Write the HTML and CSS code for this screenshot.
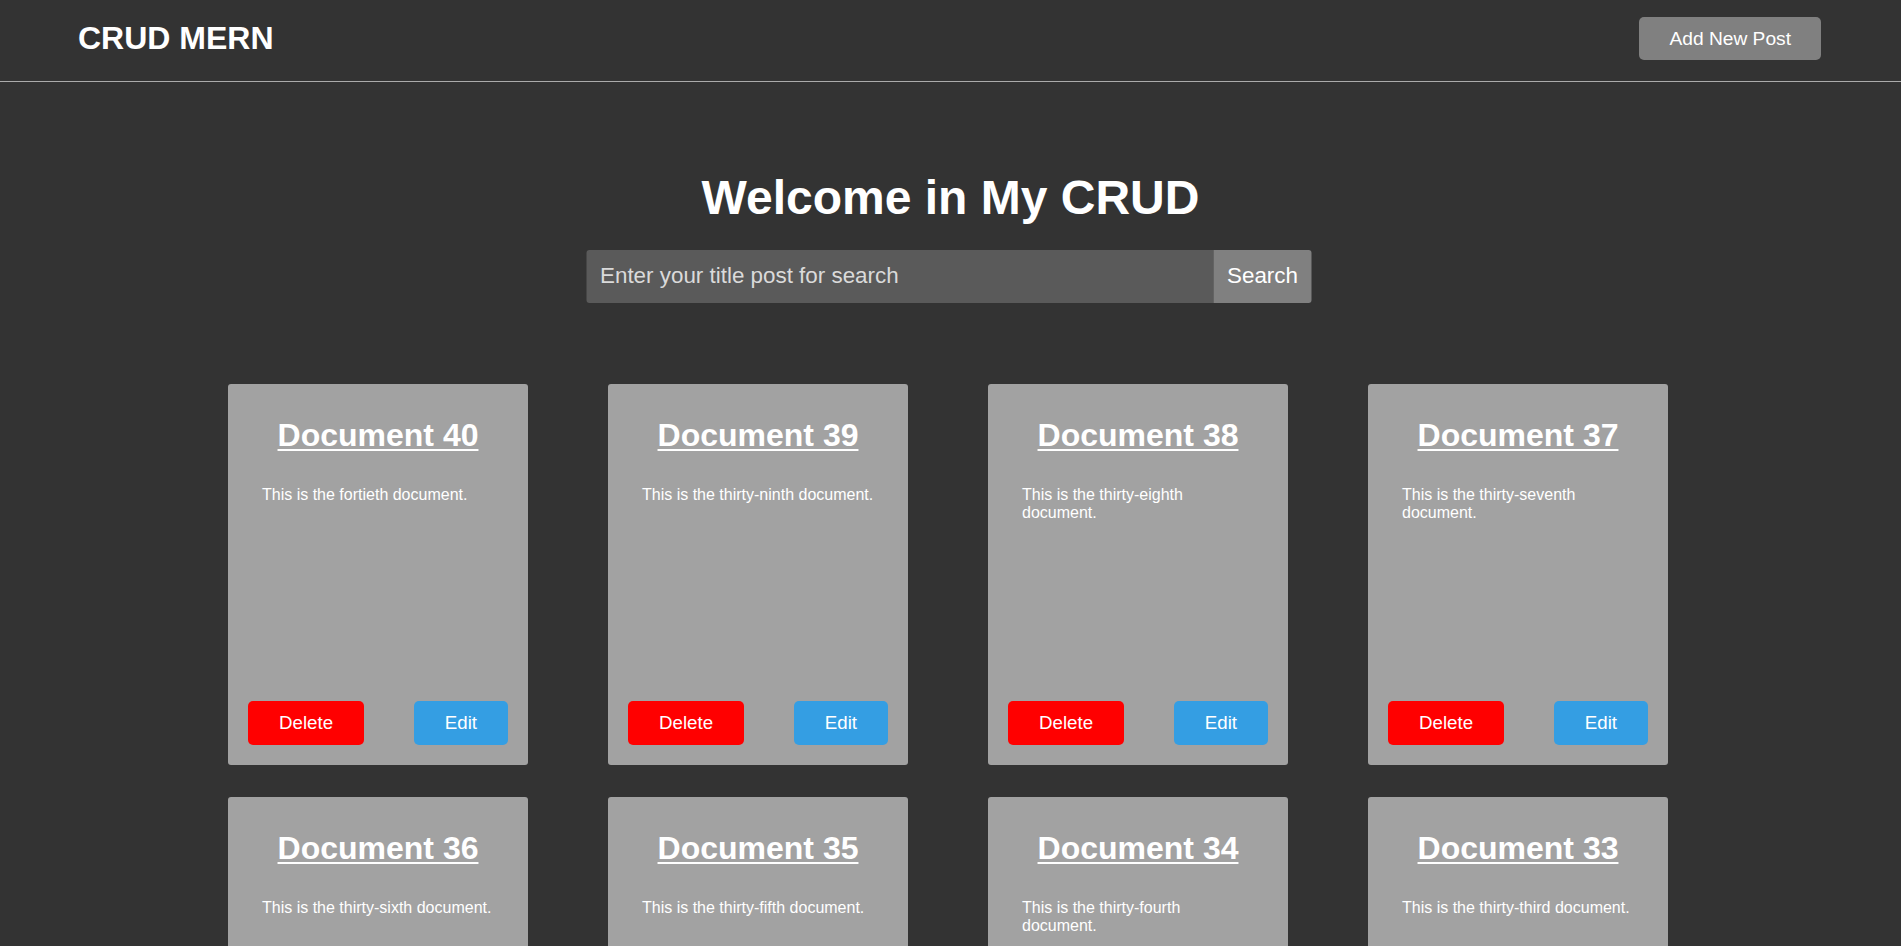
FILE: index.html
```html
<!DOCTYPE html>
<html lang="en">
<head>
<meta charset="utf-8">
<title>CRUD MERN</title>
<link rel="stylesheet" href="styles.css">
</head>
<body>
<header class="topbar">
  <a class="logo" href="#">CRUD MERN</a>
  <button class="add-btn" type="button">Add New Post</button>
</header>
<main class="main">
  <h1 class="welcome">Welcome in My CRUD</h1>
  <form class="search">
    <input class="search-input" type="text" placeholder="Enter your title post for search">
    <button class="search-btn" type="button">Search</button>
  </form>
  <section class="grid">
    <article class="card"><h2 class="card-title"><a href="#">Document 40</a></h2><p class="card-text">This is the fortieth document.</p><div class="card-actions"><button class="btn btn-delete" type="button">Delete</button><button class="btn btn-edit" type="button">Edit</button></div></article>
    <article class="card"><h2 class="card-title"><a href="#">Document 39</a></h2><p class="card-text">This is the thirty-ninth document.</p><div class="card-actions"><button class="btn btn-delete" type="button">Delete</button><button class="btn btn-edit" type="button">Edit</button></div></article>
    <article class="card"><h2 class="card-title"><a href="#">Document 38</a></h2><p class="card-text">This is the thirty-eighth document.</p><div class="card-actions"><button class="btn btn-delete" type="button">Delete</button><button class="btn btn-edit" type="button">Edit</button></div></article>
    <article class="card"><h2 class="card-title"><a href="#">Document 37</a></h2><p class="card-text">This is the thirty-seventh document.</p><div class="card-actions"><button class="btn btn-delete" type="button">Delete</button><button class="btn btn-edit" type="button">Edit</button></div></article>
    <article class="card"><h2 class="card-title"><a href="#">Document 36</a></h2><p class="card-text">This is the thirty-sixth document.</p><div class="card-actions"><button class="btn btn-delete" type="button">Delete</button><button class="btn btn-edit" type="button">Edit</button></div></article>
    <article class="card"><h2 class="card-title"><a href="#">Document 35</a></h2><p class="card-text">This is the thirty-fifth document.</p><div class="card-actions"><button class="btn btn-delete" type="button">Delete</button><button class="btn btn-edit" type="button">Edit</button></div></article>
    <article class="card"><h2 class="card-title"><a href="#">Document 34</a></h2><p class="card-text">This is the thirty-fourth document.</p><div class="card-actions"><button class="btn btn-delete" type="button">Delete</button><button class="btn btn-edit" type="button">Edit</button></div></article>
    <article class="card"><h2 class="card-title"><a href="#">Document 33</a></h2><p class="card-text">This is the thirty-third document.</p><div class="card-actions"><button class="btn btn-delete" type="button">Delete</button><button class="btn btn-edit" type="button">Edit</button></div></article>
    <article class="card"><h2 class="card-title"><a href="#">Document 32</a></h2><p class="card-text">This is the thirty-second document.</p><div class="card-actions"><button class="btn btn-delete" type="button">Delete</button><button class="btn btn-edit" type="button">Edit</button></div></article>
    <article class="card"><h2 class="card-title"><a href="#">Document 31</a></h2><p class="card-text">This is the thirty-first document.</p><div class="card-actions"><button class="btn btn-delete" type="button">Delete</button><button class="btn btn-edit" type="button">Edit</button></div></article>
    <article class="card"><h2 class="card-title"><a href="#">Document 30</a></h2><p class="card-text">This is the thirtieth document.</p><div class="card-actions"><button class="btn btn-delete" type="button">Delete</button><button class="btn btn-edit" type="button">Edit</button></div></article>
    <article class="card"><h2 class="card-title"><a href="#">Document 29</a></h2><p class="card-text">This is the twenty-ninth document.</p><div class="card-actions"><button class="btn btn-delete" type="button">Delete</button><button class="btn btn-edit" type="button">Edit</button></div></article>
  </section>
</main>
</body>
</html>
```
FILE: styles.css
```css
* {
  box-sizing: border-box;
}

html, body {
  margin: 0;
  padding: 0;
  background: #333333;
  color: #ffffff;
  font-family: "Liberation Sans", Arial, sans-serif;
}

body::-webkit-scrollbar {
  display: none;
}

.topbar {
  display: flex;
  justify-content: space-between;
  align-items: center;
  height: 82px;
  padding: 17px 80px 21px 78px;
  border-bottom: 1px solid #ababab;
}

.logo {
  color: #ffffff;
  font-size: 32px;
  font-weight: bold;
  text-decoration: none;
  line-height: normal;
}

.add-btn {
  background: #808080;
  color: #ffffff;
  border: none;
  border-radius: 5px;
  font-family: inherit;
  font-size: 19.2px;
  line-height: normal;
  padding: 10.5px 30px;
  cursor: pointer;
}

.main {
  display: flex;
  flex-direction: column;
  align-items: center;
  padding-bottom: 40px;
}

.welcome {
  margin: 88px 0 0;
  font-size: 48px;
  font-weight: bold;
  line-height: normal;
  text-align: center;
}

.search {
  display: flex;
  width: 725px;
  margin: 25px 0 0;
  transform: translateX(-1.5px);
}

.search-input {
  flex: 1;
  min-width: 0;
  background: #5a5a5a;
  color: #ffffff;
  border: none;
  outline: none;
  border-radius: 3px 0 0 3px;
  font-family: inherit;
  font-size: 22.4px;
  line-height: normal;
  padding: 13.4px 13.5px;
}

.search-input::placeholder {
  color: #dadada;
}

.search-btn {
  width: 98px;
  background: #808080;
  color: #ffffff;
  border: none;
  border-radius: 0 3px 3px 0;
  font-family: inherit;
  font-size: 22.4px;
  line-height: normal;
  padding: 13.4px 0;
  cursor: pointer;
}

.grid {
  display: grid;
  grid-template-columns: repeat(4, 300px);
  column-gap: 80px;
  row-gap: 32px;
  margin: 81px 5px 0 0;
}

.card {
  display: flex;
  flex-direction: column;
  height: 381px;
  padding: 20px;
  background: #a2a2a2;
  border-radius: 3px;
}

.card-title {
  margin: 13px 0 0;
  font-size: 32px;
  font-weight: bold;
  line-height: normal;
  text-align: center;
}

.card-title a {
  color: #ffffff;
  text-decoration: underline;
  text-decoration-thickness: 2px;
  text-underline-offset: 3px;
}

.card-text {
  margin: 32px 0 0;
  padding: 0 14px;
  font-size: 16px;
  line-height: normal;
  color: #ffffff;
}

.card-actions {
  display: flex;
  justify-content: space-between;
  margin-top: auto;
}

.btn {
  border: none;
  border-radius: 5px;
  color: #ffffff;
  font-family: inherit;
  font-size: 18.7px;
  line-height: normal;
  padding: 11px 31px;
  cursor: pointer;
}

.btn-delete {
  background: #ff0000;
}

.btn-edit {
  background: #349ee3;
}
```
